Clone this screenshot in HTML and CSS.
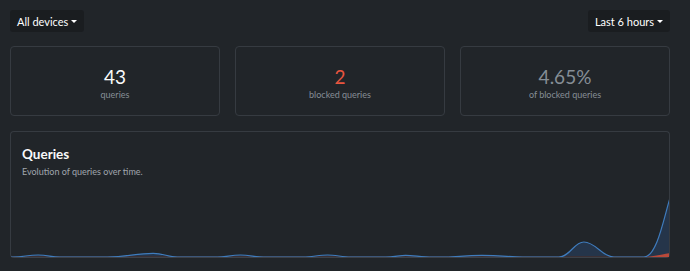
FILE: index.html
```html
<!DOCTYPE html>
<html lang="en">
<head>
  <meta charset="UTF-8">
  <meta name="viewport" content="width=device-width, initial-scale=1.0">
  <title>Dashboard</title>
  <link rel="stylesheet" href="styles.css">
</head>
<body>
  <div class="toolbar">
    <button class="dropdown">All devices <span class="caret"></span></button>
    <button class="dropdown">Last 6 hours <span class="caret"></span></button>
  </div>

  <div class="stats">
    <div class="stat">
      <div class="value">43</div>
      <div class="label">queries</div>
    </div>
    <div class="stat">
      <div class="value red">2</div>
      <div class="label">blocked queries</div>
    </div>
    <div class="stat">
      <div class="value muted">4.65%</div>
      <div class="label">of blocked queries</div>
    </div>
  </div>

  <div class="panel">
    <div class="panel-head">
      <h2>Queries</h2>
      <p>Evolution of queries over time.</p>
    </div>
    <svg class="chart" viewBox="0 0 657 70" preserveAspectRatio="none">
      <path class="area" d="M0,70 L2,70 C12,70 17,68 27,68 C37,68 40,70 49,70 L96,70 C115,70 125,66.3 142,66.3 C152,66.3 157,70 166,70 L206,70 C214,70 220,68 229,68 C238,68 244,70 252,70 L292,70 C300,70 308,68 316,68 C324,68 331,70 339,70 L374,70 C382,70 388,68.3 394,68.3 C402,68.3 410,70 421,70 L434,70 C446,70 452,68.3 470,68.3 C490,68.3 498,70 511,70 L547,70 C558,70 562,55 572,55 C584,55 590,70 602,70 L632,70 C645,70 652,30 658,11 L658,70 Z" />
      <path class="blocked-line" d="M0,69.6 L634,69.6" />
      <path class="line" d="M0,70 L2,70 C12,70 17,68 27,68 C37,68 40,70 49,70 L96,70 C115,70 125,66.3 142,66.3 C152,66.3 157,70 166,70 L206,70 C214,70 220,68 229,68 C238,68 244,70 252,70 L292,70 C300,70 308,68 316,68 C324,68 331,70 339,70 L374,70 C382,70 388,68.3 394,68.3 C402,68.3 410,70 421,70 L434,70 C446,70 452,68.3 470,68.3 C490,68.3 498,70 511,70 L547,70 C558,70 562,55 572,55 C584,55 590,70 602,70 L632,70 C645,70 652,30 658,11" />
      <path class="blocked-area" d="M634,70 C645,69 652,67 658,66 L658,70 Z" />
    </svg>
  </div>
</body>
</html>
```

FILE: styles.css
```css
* {
  box-sizing: border-box;
  margin: 0;
  padding: 0;
}
html, body {
  height: 100%;
}
body {
  background: #212529;
  color: #fff;
  font-family: Lato, "Noto Sans", sans-serif;
  padding: 10px 20px 0 10px;
}

.toolbar {
  display: flex;
  justify-content: space-between;
}
.dropdown {
  display: flex;
  align-items: center;
  gap: 3px;
  height: 22px;
  padding: 0 7px;
  border: 0;
  border-radius: 3px;
  background: #1a1d20;
  color: #fff;
  font-family: inherit;
  font-size: 11px;
}
.caret {
  width: 0;
  height: 0;
  border-left: 3px solid transparent;
  border-right: 3px solid transparent;
  border-top: 3px solid #fff;
}

.stats {
  display: grid;
  grid-template-columns: repeat(3, 1fr);
  gap: 15px;
  margin-top: 14px;
}
.stat {
  height: 70px;
  border: 1px solid #363b41;
  border-radius: 4px;
  display: flex;
  flex-direction: column;
  align-items: center;
  justify-content: center;
  padding-top: 6px;
}
.value {
  font-size: 19px;
  line-height: 20px;
  color: #f8f9fa;
}
.value.red {
  color: #e8553f;
}
.value.muted {
  color: #868e96;
}
.label {
  margin-top: 2px;
  font-size: 9px;
  line-height: 12px;
  color: #868e96;
}

.panel {
  margin-top: 15px;
  height: 127px;
  border: 1px solid #363b41;
  border-bottom-color: #3c4148;
  border-radius: 4px;
  display: flex;
  flex-direction: column;
}
.panel-head {
  padding: 13px 11px 0;
}
.panel-head h2 {
  font-size: 13.5px;
  font-weight: 700;
  line-height: 18px;
  color: #f8f9fa;
}
.panel-head p {
  margin-top: 3px;
  font-size: 9px;
  color: #a0a6ad;
}
.chart {
  display: block;
  margin-top: auto;
  width: 100%;
  height: 70px;
}
.area {
  fill: #25354a;
}
.line {
  fill: none;
  stroke: #3f7cbd;
  stroke-width: 1.2;
}
.blocked-area {
  fill: #b8493a;
}
.blocked-line {
  fill: none;
  stroke: #3b3034;
  stroke-width: 1;
}
```
